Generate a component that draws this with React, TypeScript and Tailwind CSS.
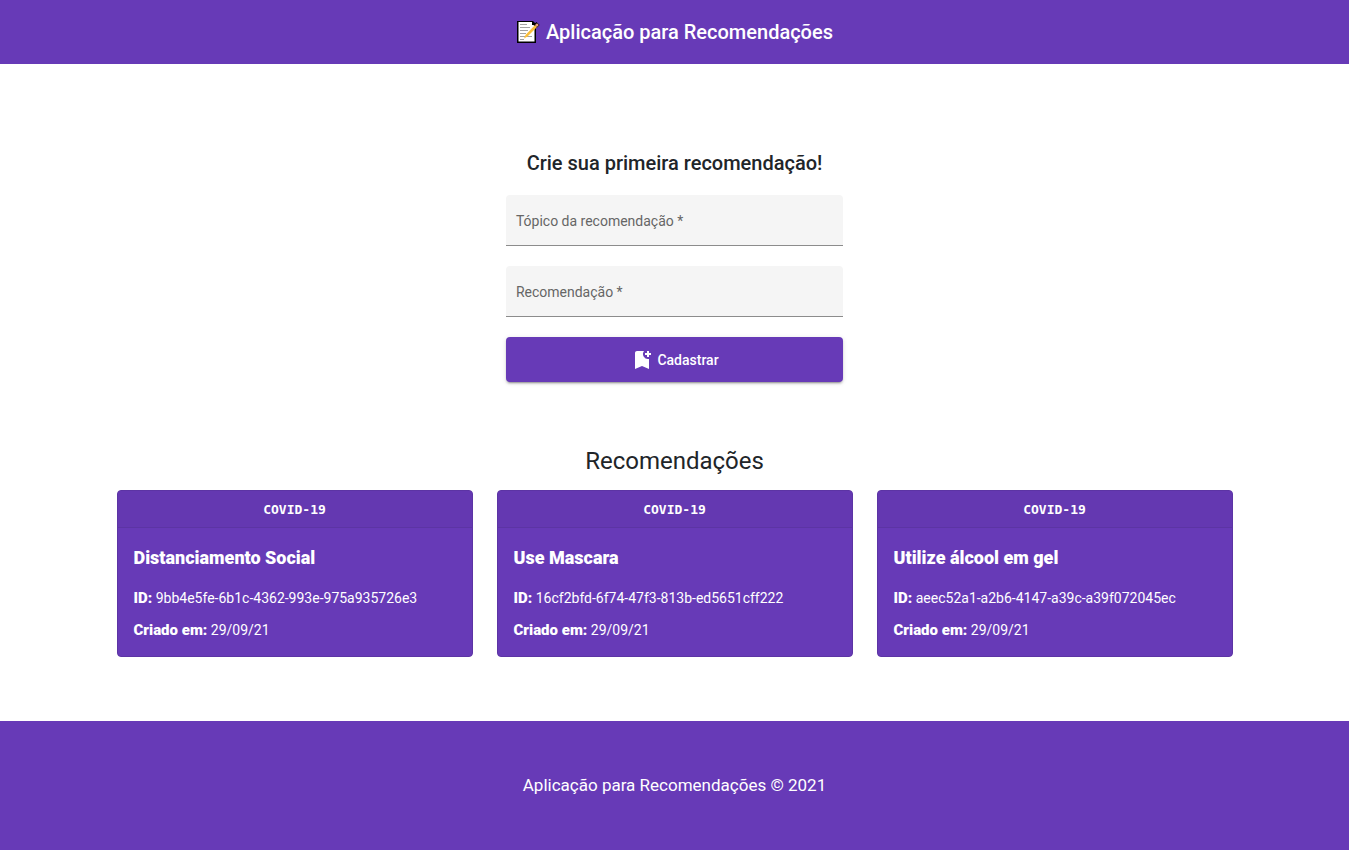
import { useState } from "react";
import { MdBookmarkAdd } from "react-icons/md";

type Recommendation = {
  id: string;
  topic: string;
  title: string;
  createdAt: string;
};

const recommendations: Recommendation[] = [
  { id: "9bb4e5fe-6b1c-4362-993e-975a935726e3", topic: "COVID-19", title: "Distanciamento Social", createdAt: "29/09/21" },
  { id: "16cf2bfd-6f74-47f3-813b-ed5651cff222", topic: "COVID-19", title: "Use Mascara", createdAt: "29/09/21" },
  { id: "aeec52a1-a2b6-4147-a39c-a39f072045ec", topic: "COVID-19", title: "Utilize álcool em gel", createdAt: "29/09/21" },
];

function MemoIcon() {
  return (
    <svg viewBox="0 0 24 24" className="size-6 shrink-0" aria-hidden="true">
      <path d="M1 1h16l3 3v19H1z" fill="#000" />
      <path d="M2.500 2h13.500v3h2.500v16.500h-16z" fill="#fff" />
      <path d="M4 4.500h7M4 7.500h10M4 10.500h8M4 13.500h6M4 16.500h12M4 19.500h4" stroke="#a3a3a3" strokeWidth="1" />
      <path d="M19 6.500l3-3" stroke="#000" strokeWidth="4.500" />
      <path d="M8 18.500l1.500-3.500 9.500-10 2 2-9.500 9.500z" fill="#fbbf3b" />
      <path d="M19 5l2-1.700 1.800 1.800-1.800 1.900z" fill="#e59a83" />
    </svg>
  );
}

function Field({ id, label }: { id: string; label: string }) {
  const [value, setValue] = useState("");
  return (
    <div className="relative">
      <input
        id={id}
        required
        value={value}
        onChange={(event) => setValue(event.target.value)}
        className="block h-[51px] w-full rounded-t border-b border-[#8c8c8c] bg-[#f5f5f5] px-2.5 pt-4 text-sm text-[#212529] outline-none focus:border-[#673ab7]"
      />
      <label
        htmlFor={id}
        className={
          value
            ? "pointer-events-none absolute inset-x-2.5 top-1 text-xs text-[#666]"
            : "pointer-events-none absolute inset-0 flex items-center px-2.5 text-sm text-[#666]"
        }
      >
        {label} *
      </label>
    </div>
  );
}

function Card({ item }: { item: Recommendation }) {
  return (
    <article className="overflow-hidden rounded border border-[#5c34a4] bg-[#673ab7] text-sm text-white">
      <div className="border-b border-[#5c34a4] bg-[#6438b1] px-4 pt-[9px] pb-[7px] text-center font-['DejaVu_Sans_Mono',monospace] text-[13px] leading-5 font-bold">
        {item.topic}
      </div>
      <div className="p-4">
        <h3 className="mb-4 text-lg leading-7 font-black">{item.title}</h3>
        <p className="mb-3 leading-5">
          <strong className="text-[15px] leading-5 font-black">ID:</strong> {item.id}
        </p>
        <p className="leading-5">
          <strong className="text-[15px] leading-5 font-black">Criado em:</strong> {item.createdAt}
        </p>
      </div>
    </article>
  );
}

export default function App() {
  return (
    <div className="flex min-h-screen flex-col bg-white font-[Roboto,sans-serif] text-[#212529]">
      <header className="flex h-16 items-center justify-center gap-1.5 bg-[#673ab7] text-white">
        <MemoIcon />
        <h1 className="text-xl font-medium">Aplicação para Recomendações</h1>
      </header>
      <main className="flex-1 pb-16">
        <form className="mx-auto mt-[83px] w-1/4" onSubmit={(event) => event.preventDefault()}>
          <h2 className="mb-4 text-center text-xl leading-8 font-medium">Crie sua primeira recomendação!</h2>
          <div className="flex flex-col gap-5">
            <Field id="topic" label="Tópico da recomendação" />
            <Field id="recommendation" label="Recomendação" />
            <button
              type="submit"
              className="flex h-[45px] items-center justify-center gap-[3px] rounded bg-[#673ab7] text-sm font-medium text-white shadow-[0_3px_1px_-2px_rgba(0,0,0,0.2),0_2px_2px_0_rgba(0,0,0,0.14),0_1px_5px_0_rgba(0,0,0,0.12)]"
            >
              <MdBookmarkAdd className="size-6" aria-hidden="true" />
              Cadastrar
            </button>
          </div>
        </form>
        <section className="mx-auto mt-16 max-w-[1140px] px-3">
          <h2 className="mb-3.5 text-center text-2xl leading-[30px]">Recomendações</h2>
          <div className="grid grid-cols-3 gap-6">
            {recommendations.map((item) => (
              <Card key={item.id} item={item} />
            ))}
          </div>
        </section>
      </main>
      <footer className="flex h-[129px] items-center justify-center bg-[#673ab7] text-[17px] text-white">
        <p>Aplicação para Recomendações © 2021</p>
      </footer>
    </div>
  );
}
